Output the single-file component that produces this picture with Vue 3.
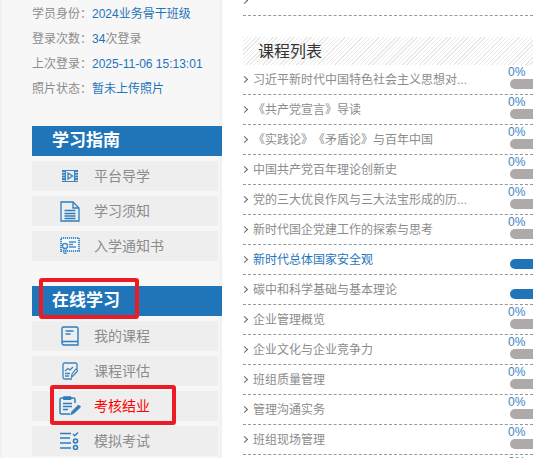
<script setup>
const info = [
  { label: '学员身份：', value: '2024业务骨干班级' },
  { label: '登录次数：', value: '34', dark: '次登录' },
  { label: '上次登录：', value: '2025-11-06 15:13:01' },
  { label: '照片状态：', value: '暂未上传照片' },
]
const guide = [
  { name: '平台导学', icon: 'film' },
  { name: '学习须知', icon: 'doc' },
  { name: '入学通知书', icon: 'cert' },
]
const online = [
  { name: '我的课程', icon: 'book' },
  { name: '课程评估', icon: 'chart' },
  { name: '考核结业', icon: 'clip', red: true },
  { name: '模拟考试', icon: 'list' },
]
const courses = [
  { name: '习近平新时代中国特色社会主义思想对...', pct: '0%' },
  { name: '《共产党宣言》导读', pct: '0%' },
  { name: '《实践论》《矛盾论》与百年中国', pct: '0%' },
  { name: '中国共产党百年理论创新史', pct: '0%' },
  { name: '党的三大优良作风与三大法宝形成的历...', pct: '0%' },
  { name: '新时代国企党建工作的探索与思考', pct: '0%' },
  { name: '新时代总体国家安全观', pct: '', active: true, done: true },
  { name: '碳中和科学基础与基本理论', pct: '', done: true },
  { name: '企业管理概览', pct: '0%' },
  { name: '企业文化与企业竞争力', pct: '0%' },
  { name: '班组质量管理', pct: '0%' },
  { name: '管理沟通实务', pct: '0%' },
  { name: '班组现场管理', pct: '0%' },
]
</script>

<template>
  <div class="page">
    <aside class="side">
      <div class="info">
        <p v-for="row in info" :key="row.label" class="info-row">
          <span class="lab">{{ row.label }}</span><span class="val">{{ row.value }}</span><span v-if="row.dark" class="lab">{{ row.dark }}</span>
        </p>
      </div>

      <section class="block">
        <h3 class="block-title">学习指南</h3>
        <a v-for="item in guide" :key="item.name" class="nav">
          <span class="ico">
            <svg v-if="item.icon === 'film'" width="16" height="12" viewBox="0 0 16 12" fill="none" stroke="#3d85c0">
              <path d="M0 .5h16M0 11.500h16" stroke-width="1" />
              <path d="M1.500 0v12M14.500 0v12" stroke-width="3" stroke-dasharray="2 .7" />
              <path d="M3.500 0v12M12.500 0v12" stroke-width="1" />
              <path d="M6 3l4.500 3L6 9z" stroke-width="1.400" />
            </svg>
            <svg v-else-if="item.icon === 'doc'" width="20" height="21" viewBox="0 0 20 21" fill="none" stroke="#2f7dbd" stroke-width="1.300">
              <path d="M1 1h12l6 6v13H1z" />
              <path d="M13 1v6h6" />
              <path d="M4.500 9.500h11M4.500 12.500h11M4.500 15h11M4.500 17.500h11" stroke-width="1.400" />
            </svg>
            <svg v-else-if="item.icon === 'cert'" width="20" height="18" viewBox="0 0 20 18" fill="none" stroke="#4a8fc8">
              <rect x="1" y="1" width="18" height="13" fill="#f6fafd" stroke-dasharray="1.200 .8" stroke-width="2" />
              <path d="M9 5h7M9 7.500h4M9 10h7" stroke-width="1.300" />
              <circle cx="5" cy="9" r="2.500" fill="#fff" stroke-width="1.500" />
              <path d="M4 11.500V17l1-1 1 1v-5.500" />
            </svg>
          </span>
          <span class="nav-text">{{ item.name }}</span>
        </a>
      </section>

      <section class="block">
        <h3 class="block-title">在线学习</h3>
        <a v-for="item in online" :key="item.name" class="nav">
          <span class="ico">
            <svg v-if="item.icon === 'book'" width="18" height="20" viewBox="0 0 18 20" fill="none" stroke="#2f7dbd" stroke-width="1.400">
              <path d="M1 16.500V2.500A1.500 1.500 0 0 1 2.500 1h13A1.500 1.500 0 0 1 17 2.500V19H3a2 2 0 0 1-2-2.500A2 2 0 0 1 3 15.500h14" />
              <path d="M4.500 5h8M4.500 8h5" stroke-width="1.600" />
            </svg>
            <svg v-else-if="item.icon === 'chart'" width="16" height="18" viewBox="0 0 16 18" fill="none" stroke="#3d85c0" stroke-width="1.300">
              <path d="M10 17H2.500A1.500 1.500 0 0 1 1 15.500v-13A1.500 1.500 0 0 1 2.500 1h11A1.500 1.500 0 0 1 15 2.500V7" />
              <path d="M3 9l3-2.500 2 1.500 3-3M3 14h4M3 11.500h5" />
              <path d="M9.500 15l.5-3 4-5 2 1.500-4.500 5z" stroke-width="1.200" />
            </svg>
            <svg v-else-if="item.icon === 'clip'" width="22" height="20" viewBox="0 0 22 20" fill="none" stroke="#2f7dbd" stroke-width="1.500">
              <path d="M16 7V3.500A1.500 1.500 0 0 0 14.500 2H2.500A1.500 1.500 0 0 0 1 3.500v13A1.500 1.500 0 0 0 2.500 18H11" />
              <path d="M4.500 .8h7.500v2.700H4.500z" fill="#2f7dbd" stroke-width="1" />
              <path d="M4 7.500h9M4 10.500h9M4 13.500h5" />
              <path d="M13 15.500l-1.200 3 3-1.200L21.500 11 19.500 9z" fill="#2f7dbd" stroke-width="1" />
            </svg>
            <svg v-else-if="item.icon === 'list'" width="19" height="18" viewBox="0 0 19 18" fill="none" stroke="#2f7dbd" stroke-width="1.600">
              <path d="M0 1.500h11M0 6h10M0 11h11M0 16h11" />
              <path d="M13 2l1.800 1.800L18 .5" stroke-width="1.300" />
              <circle cx="15.500" cy="9" r="2" />
              <circle cx="15.500" cy="15.500" r="2" />
            </svg>
          </span>
          <span class="nav-text" :class="{ red: item.red }">{{ item.name }}</span>
        </a>
      </section>

      <i class="mark mark-a"></i>
      <i class="mark mark-b"></i>
    </aside>

    <main class="main">
      <div class="row first"><span class="arrow"></span></div>
      <h2 class="head">课程列表</h2>
      <div v-for="c in courses" :key="c.name" class="row">
        <span class="arrow"></span>
        <span class="name" :class="{ active: c.active }">{{ c.name }}</span>
        <div class="prog">
          <span class="pct">{{ c.pct }}</span>
          <span class="bar" :class="{ done: c.done }"></span>
        </div>
      </div>
      <div class="row">
        <div class="prog"><span class="pct">0%</span></div>
      </div>
    </main>
  </div>
</template>

<style scoped>
.page {
  width: 533px;
  height: 458px;
  overflow: hidden;
  display: flex;
  background: #fff;
  font-family: "Liberation Sans", "Noto Sans CJK SC", sans-serif;
  font-size: 12px;
  text-spacing-trim: space-all;
}
.side {
  position: relative;
  flex: none;
  width: 222px;
  height: 458px;
  background: linear-gradient(to right, #f1f1f1 0 2px, #f7f7f7 2px calc(100% - 4px), #efefef 100%);
  padding-top: 2px;
  box-sizing: border-box;
}
.info { padding-left: 32px; }
.info-row {
  margin: 0;
  height: 25px;
  line-height: 25px;
  white-space: nowrap;
}
.lab { color: #8c8c8c; }
.val { color: #1f74b8; }
.block { margin: 24px 0 0 32px; }
.block + .block { margin-top: 25px; }
.block-title {
  margin: 0;
  height: 30px;
  line-height: 30px;
  padding-left: 20px;
  background: #2075b8;
  color: #fff;
  font-size: 17px;
  font-weight: 700;
}
.nav {
  display: flex;
  align-items: center;
  height: 30px;
  margin-top: 5px;
  margin-right: 4px;
  background: #eee;
}
.ico {
  box-sizing: border-box;
  width: 62px;
  display: flex;
  justify-content: center;
  padding-left: 13px;
  flex: none;
}
.nav-text { color: #8c8c8c; font-size: 14px; margin-top: -2px; }
.nav-text.red { color: #f00; }
.mark {
  position: absolute;
  box-sizing: border-box;
  border: 4px solid #ed1c24;
  border-radius: 3px;
}
.mark-a { left: 39px; top: 278px; width: 100px; height: 41px; }
.mark-b { left: 50px; top: 385px; width: 126px; height: 40px; }

.main {
  flex: none;
  width: 290px;
  margin-left: 21px;
}
.row {
  position: relative;
  display: flex;
  align-items: center;
  box-sizing: border-box;
  height: 30px;
  border-bottom: 1px dashed #999;
}
.row.first { margin-top: -14px; }
.head {
  margin: 21px 0 0;
  height: 28px;
  line-height: 30px;
  padding-left: 15px;
  font-size: 16px;
  font-weight: 400;
  color: #333;
  background: repeating-linear-gradient(135deg, #e9e9e9 0 1px, #fff 1px 3px);
}
.arrow {
  flex: none;
  width: 4px;
  height: 4px;
  margin: 0 3px 0 -1px;
  border-top: 1px solid #666;
  border-right: 1px solid #666;
  transform: rotate(45deg);
}
.name {
  flex: none;
  margin-left: 3px;
  margin-top: -2px;
  color: #8c8c8c;
  white-space: nowrap;
}
.name.active { color: #1f74b8; }
.prog {
  position: absolute;
  left: 265px;
  top: 0;
  width: 30px;
  height: 100%;
}
.pct {
  display: block;
  height: 14px;
  line-height: 14px;
  color: #3d85c0;
  font-size: 12px;
}
.bar {
  display: block;
  width: 40px;
  height: 10px;
  margin-left: 2px;
  border-radius: 5px;
  background: #aeaaaa;
}
.bar.done { background: #2075b8; }
</style>
